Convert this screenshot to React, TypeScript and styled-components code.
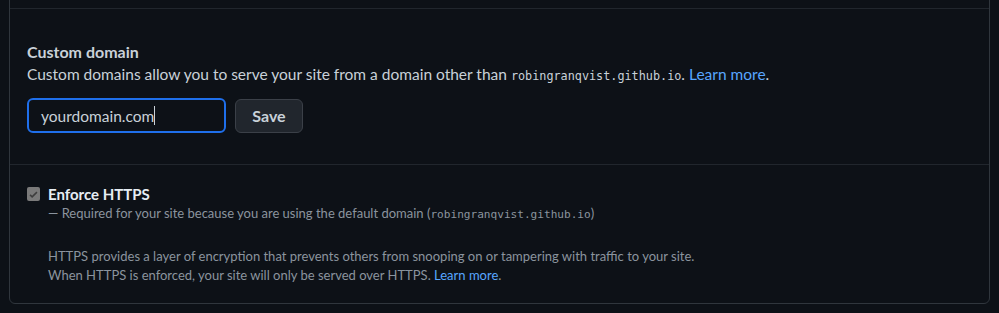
import React from 'react';
import styled, { createGlobalStyle } from 'styled-components';

const GlobalStyle = createGlobalStyle`
  html, body {
    margin: 0;
    padding: 0;
    background: #0d1117;
  }
  body {
    font-family: Lato, "Segoe UI", "Noto Sans", sans-serif;
    color: #c9d1d9;
  }
`;

const Page = styled.div`
  width: 999px;
  height: 313px;
  padding: 0 9px;
  box-sizing: border-box;
  overflow: hidden;
`;

const Box = styled.div`
  margin-top: -1px;
  border: 1px solid #30363d;
  border-radius: 0 0 6px 6px;
  width: 981px;
  box-sizing: border-box;
`;

const TopStrip = styled.div`
  height: 8px;
`;

const Section = styled.div<{ $pad: string }>`
  padding: ${(p) => p.$pad};
  border-top: 1px solid #21262d;
`;

const Heading = styled.h3`
  margin: 0;
  font-size: 16px;
  font-weight: 700;
  line-height: 22px;
  color: #c9d1d9;
`;

const Description = styled.p`
  margin: 0;
  font-size: 15.5px;
  line-height: 22px;
  color: #c9d1d9;
`;

const Code = styled.code<{ $size?: number }>`
  font-family: "DejaVu Sans Mono", "Liberation Mono", monospace;
  font-size: ${(p) => p.$size ?? 11.8}px;
`;

const Link = styled.a`
  color: #58a6ff;
  text-decoration: none;
`;

const FormRow = styled.div`
  display: flex;
  align-items: center;
  gap: 9px;
  margin-top: 11px;
`;

const Input = styled.div`
  width: 199px;
  height: 35px;
  box-sizing: border-box;
  border: 2px solid #1f6feb;
  border-radius: 6px;
  background: #0d1117;
  padding: 0 12px;
  display: flex;
  align-items: center;
  font-size: 15.5px;
  color: #c9d1d9;
`;

const Caret = styled.span`
  display: inline-block;
  width: 1px;
  height: 19px;
  background: #c9d1d9;
`;

const Button = styled.button`
  height: 34px;
  width: 68px;
  box-sizing: border-box;
  border: 1px solid #3b4048;
  border-radius: 6px;
  background: #21262d;
  color: #c9d1d9;
  font-family: inherit;
  font-size: 16px;
  font-weight: 700;
  cursor: pointer;
`;

const CheckRow = styled.div`
  display: flex;
  align-items: flex-start;
  gap: 8px;
`;

const Checkbox = styled.span`
  width: 13px;
  height: 14px;
  margin-top: 3px;
  border-radius: 2px;
  background: #7a7a7a;
  display: flex;
  align-items: center;
  justify-content: center;
  flex-shrink: 0;
`;

const CheckLabel = styled.div`
  font-size: 15px;
  font-weight: 700;
  line-height: 20px;
  color: #e6edf3;
`;

const Note = styled.p<{ $mt?: number }>`
  margin: ${(p) => p.$mt ?? 0}px 0 0;
  font-size: 13px;
  line-height: 19px;
  color: #8b949e;
`;

function App() {
  return (
    <>
      <GlobalStyle />
      <Page>
        <Box>
          <TopStrip />
          <Section $pad="32px 17px 31px">
            <Heading>Custom domain</Heading>
            <Description>
              Custom domains allow you to serve your site from a domain other than{' '}
              <Code>robingranqvist.github.io</Code>. <Link href="#">Learn more</Link>.
            </Description>
            <FormRow>
              <Input>
                yourdomain.com
                <Caret />
              </Input>
              <Button>Save</Button>
            </FormRow>
          </Section>
          <Section $pad="19px 17px 18px">
            <CheckRow>
              <Checkbox>
                <svg width="11" height="11" viewBox="0 0 16 16">
                  <path d="M3 8.5l3 3 7-7" fill="none" stroke="#3d3d3d" strokeWidth="2.2" />
                </svg>
              </Checkbox>
              <div>
                <CheckLabel>Enforce HTTPS</CheckLabel>
                <Note>
                  — Required for your site because you are using the default domain (
                  <Code $size={11.1}>robingranqvist.github.io</Code>)
                </Note>
                <Note $mt={23}>
                  HTTPS provides a layer of encryption that prevents others from snooping on or
                  tampering with traffic to your site.
                  <br />
                  When HTTPS is enforced, your site will only be served over HTTPS.{' '}
                  <Link href="#">Learn more</Link>.
                </Note>
              </div>
            </CheckRow>
          </Section>
        </Box>
      </Page>
    </>
  );
}

export default App;
